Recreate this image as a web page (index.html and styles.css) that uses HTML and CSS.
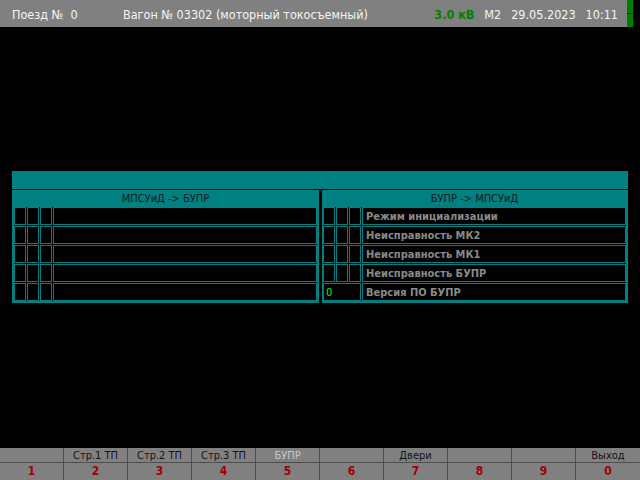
FILE: index.html
```html
<!DOCTYPE html>
<html lang="ru">
<head>
<meta charset="utf-8">
<title>БУПР</title>
<link rel="stylesheet" href="styles.css">
</head>
<body>
<div class="screen">
  <header class="topbar">
    <div class="topbar-main">
      <span class="train">Поезд №&nbsp; 0</span>
      <span class="car">Вагон № 03302 (моторный токосъемный)</span>
      <span class="spacer"></span>
      <span class="voltage">3.0 кВ</span>
      <span class="info">М2</span>
      <span class="info">29.05.2023</span>
      <span class="info">10:11</span>
    </div>
    <div class="indicator"><span class="ind-seg"></span><span class="ind-seg"></span></div>
    <div class="topbar-end"></div>
  </header>

  <main class="content">
    <section class="panel">
      <div class="panel-title"></div>
      <div class="columns">
        <div class="column">
          <div class="col-head">МПСУиД -&gt; БУПР</div>
          <div class="rows">
            <div class="row"><span class="cell"></span><span class="cell"></span><span class="cell"></span><span class="cell wide"></span></div>
            <div class="row"><span class="cell"></span><span class="cell"></span><span class="cell"></span><span class="cell wide"></span></div>
            <div class="row"><span class="cell"></span><span class="cell"></span><span class="cell"></span><span class="cell wide"></span></div>
            <div class="row"><span class="cell"></span><span class="cell"></span><span class="cell"></span><span class="cell wide"></span></div>
            <div class="row"><span class="cell"></span><span class="cell"></span><span class="cell"></span><span class="cell wide"></span></div>
          </div>
        </div>
        <div class="column">
          <div class="col-head">БУПР -&gt; МПСУиД</div>
          <div class="rows">
            <div class="row"><span class="cell"></span><span class="cell"></span><span class="cell"></span><span class="cell wide label">Режим инициализации</span></div>
            <div class="row"><span class="cell"></span><span class="cell"></span><span class="cell"></span><span class="cell wide label">Неисправность МК2</span></div>
            <div class="row"><span class="cell"></span><span class="cell"></span><span class="cell"></span><span class="cell wide label">Неисправность МК1</span></div>
            <div class="row"><span class="cell"></span><span class="cell"></span><span class="cell"></span><span class="cell wide label">Неисправность БУПР</span></div>
            <div class="row"><span class="cell merged value">0</span><span class="cell wide label">Версия ПО БУПР</span></div>
          </div>
        </div>
      </div>
    </section>
  </main>

  <footer class="fkeys">
    <div class="fk-label"></div>
    <div class="fk-label">Стр.1 ТП</div>
    <div class="fk-label">Стр.2 ТП</div>
    <div class="fk-label">Стр.3 ТП</div>
    <div class="fk-label disabled">БУПР</div>
    <div class="fk-label"></div>
    <div class="fk-label">Двери</div>
    <div class="fk-label"></div>
    <div class="fk-label"></div>
    <div class="fk-label">Выход</div>
    <div class="fk-num">1</div>
    <div class="fk-num">2</div>
    <div class="fk-num">3</div>
    <div class="fk-num">4</div>
    <div class="fk-num">5</div>
    <div class="fk-num">6</div>
    <div class="fk-num">7</div>
    <div class="fk-num">8</div>
    <div class="fk-num">9</div>
    <div class="fk-num">0</div>
  </footer>
</div>
</body>
</html>
```

FILE: styles.css
```css
html, body {
  margin: 0;
  padding: 0;
  background: #000;
}

.screen {
  width: 640px;
  height: 480px;
  display: flex;
  flex-direction: column;
  background: #000;
  font-family: "DejaVu Sans Condensed", "DejaVu Sans", sans-serif;
  font-stretch: condensed;
  overflow: hidden;
}

/* Top status bar */
.topbar {
  height: 27px;
  display: flex;
  flex: none;
}

.topbar-main {
  flex: 1;
  background: #808080;
  display: flex;
  align-items: center;
  padding: 2px 9px 0 12px;
  gap: 10px;
  font-size: 12.5px;
  color: #f4f4f4;
  white-space: nowrap;
}

.train {
  width: 101px;
}

.spacer {
  flex: 1;
}

.voltage {
  color: #008000;
  font-weight: bold;
}

.indicator {
  width: 6px;
  display: flex;
  flex-direction: column;
  gap: 1px;
  background: #003000;
}

.ind-seg {
  flex: 1;
  background: #008000;
}

.topbar-end {
  width: 7px;
  background: #000;
}

/* Main content */
.content {
  flex: 1;
  padding-top: 144px;
}

.panel {
  margin: 0 12px;
  display: flex;
  flex-direction: column;
  gap: 1px;
  background: #000;
}

.panel-title {
  height: 18px;
  background: #008080;
}

.columns {
  display: flex;
  gap: 3px;
}

.column {
  flex: 1;
  background: #008080;
  padding: 0 2px 2px;
}

.column + .column {
  padding-left: 1px;
}

.col-head {
  height: 17px;
  line-height: 17px;
  text-align: center;
  font-size: 11px;
  color: #0c1a1a;
}

.rows {
  display: flex;
  flex-direction: column;
  gap: 1px;
  background: #000;
}

.row {
  display: flex;
  gap: 1px;
  height: 18px;
}

.cell {
  width: 12px;
  box-sizing: border-box;
  border: 1px solid #008080;
  background: #000;
  flex: none;
}

.cell.wide {
  flex: 1;
}

.cell.merged {
  width: 38px;
}

.label {
  color: #8a8a8a;
  font-weight: bold;
  font-size: 11px;
  line-height: 17px;
  padding-left: 3px;
  white-space: nowrap;
}

.value {
  color: #00ff00;
  font-size: 11px;
  line-height: 17px;
  padding-left: 2px;
}

/* Function keys */
.fkeys {
  flex: none;
  height: 32px;
  background: #808080;
  display: grid;
  grid-template-columns: repeat(10, 1fr);
  grid-template-rows: 15px 17px;
}

.fk-label,
.fk-num {
  border-right: 1px solid #4e4e4e;
  text-align: center;
}

.fk-label:nth-child(10),
.fk-num:nth-child(20) {
  border-right: none;
}

.fk-label {
  border-bottom: 1px solid #4e4e4e;
  font-size: 11px;
  line-height: 15px;
  color: #141414;
}

.fk-label.disabled {
  color: #c8c8c8;
}

.fk-num {
  font-size: 12px;
  font-weight: bold;
  line-height: 16px;
  color: #a00000;
}
```
